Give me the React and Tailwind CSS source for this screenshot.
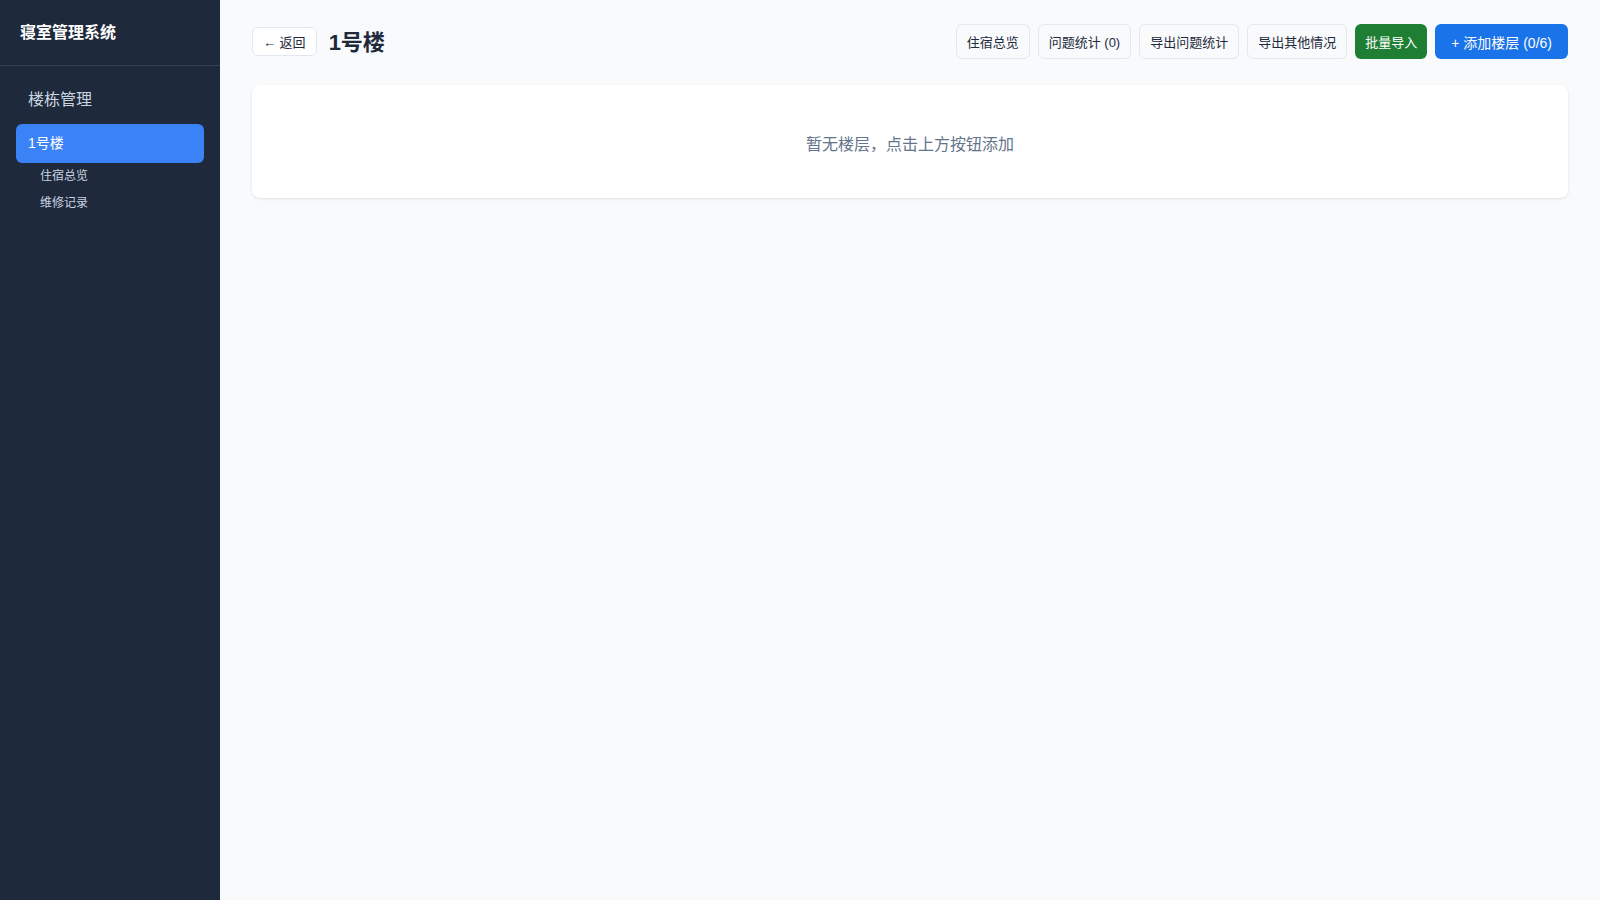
import React from 'react';

const font = { fontFamily: '"Liberation Sans", "Noto Sans CJK SC", sans-serif' };

const Sidebar = () => {
  return (
    <aside className="w-[220px] shrink-0 bg-[#1e293b] text-white flex flex-col">
      {/* brand */}
      <div className="h-[66px] flex items-center px-5 border-b border-[#334155]">
        <span className="text-base font-bold text-white">寝室管理系统</span>
      </div>
      {/* nav */}
      <nav className="p-4 flex flex-col">
        <div className="px-3 pt-[6px] pb-[4px] text-base leading-6 text-[#cbd5e1]">楼栋管理</div>
        <div className="mt-2 h-[39px] flex items-center px-3 pb-[2px] rounded-md bg-[#3b82f6] text-sm text-white">1号楼</div>
        <div className="pl-6 flex flex-col text-xs text-[#cbd5e1]">
          <span className="leading-[27px]">住宿总览</span>
          <span className="leading-[27px]">维修记录</span>
        </div>
      </nav>
    </aside>
  );
};

const GhostButton = ({ children }) => (
  <button className="h-[35px] px-[10px] pt-[2px] rounded-md border border-[#e2e8f0] bg-[#f8fafc] text-[13px] text-[#1e293b]">
    {children}
  </button>
);

export default function App() {
  return (
    <div className="flex min-h-screen h-[900px] bg-[#f8fafc]" style={font}>
      <Sidebar />

      {/* Main Content */}
      <main className="flex-1 px-8 pt-6">
        <div className="h-[35px] flex items-center justify-between mb-[26px]">
          <div className="flex items-center gap-3">
            <button className="h-[29px] px-[10px] pt-[2px] rounded-md border border-[#e2e8f0] bg-white text-[13px] text-[#1e293b]">
              ← 返回
            </button>
            <h1 className="mt-[2px] text-[22px] font-bold text-[#1e293b]">1号楼</h1>
          </div>
          <div className="flex items-center gap-2">
            <GhostButton>住宿总览</GhostButton>
            <GhostButton>问题统计 (0)</GhostButton>
            <GhostButton>导出问题统计</GhostButton>
            <GhostButton>导出其他情况</GhostButton>
            <button className="h-[35px] px-[10px] pt-[2px] rounded-md bg-[#1e7e34] text-[13px] text-white">批量导入</button>
            <button className="h-[35px] px-4 pt-[2px] rounded-md bg-[#1a73e8] text-sm text-white">+ 添加楼层 (0/6)</button>
          </div>
        </div>

        <div className="bg-white rounded-lg shadow-[0_1px_3px_rgba(0,0,0,0.1)] pt-[48px] pb-[41px] text-center text-base leading-6 text-[#64748b]">
          暂无楼层，点击上方按钮添加
        </div>
      </main>
    </div>
  );
}
